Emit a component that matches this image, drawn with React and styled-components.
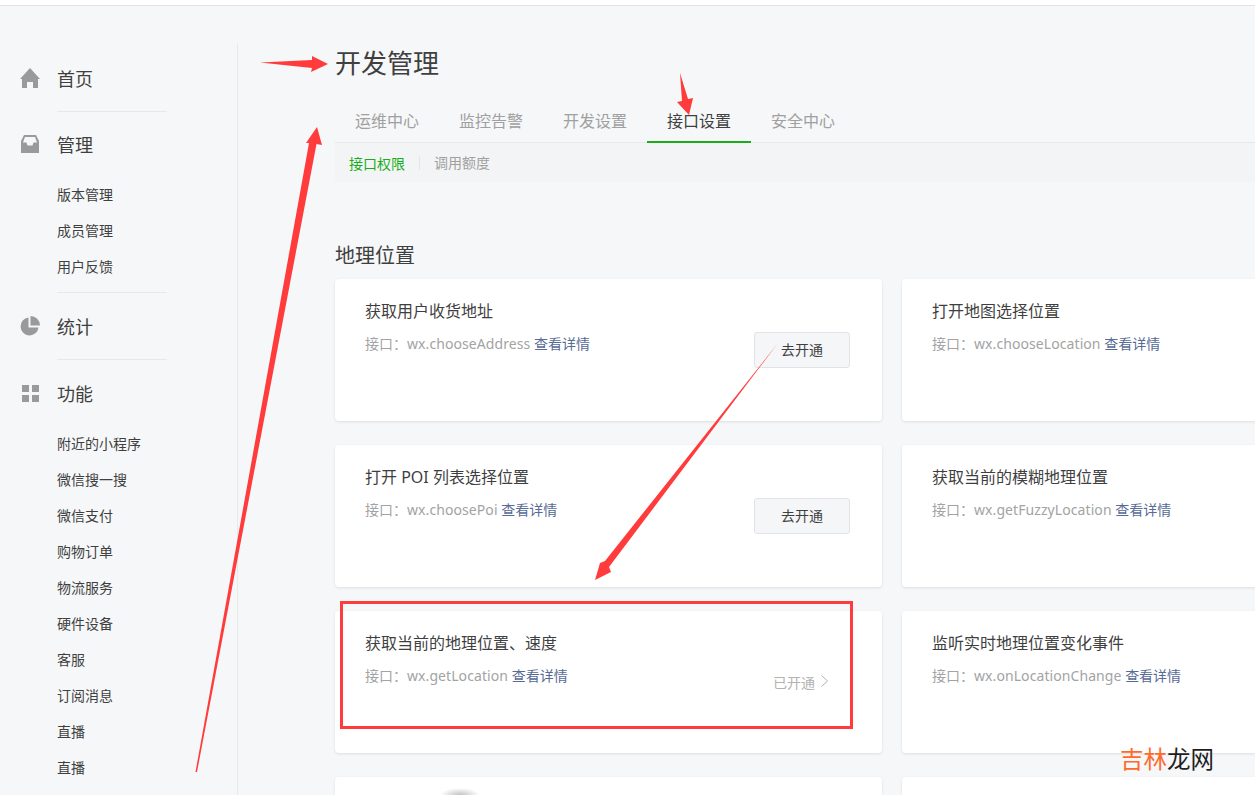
import React from 'react';
import styled, { createGlobalStyle } from 'styled-components';

const Global = createGlobalStyle`
  html, body {
    margin: 0;
    height: 100%;
    overflow: hidden;
    background: #f6f7f9;
  }
  body {
    font-family: "Noto Sans", "Noto Sans CJK SC", sans-serif;
    color: #3f3f3f;
  }
`;

const Page = styled.div`
  position: relative;
  width: 1255px;
  height: 795px;
  overflow: hidden;
`;

const TopBar = styled.div`
  height: 5px;
  background: #fff;
  border-bottom: 1px solid #e1e2e5;
`;

const Shell = styled.div`
  display: flex;
  align-items: flex-start;
`;

const Sidebar = styled.nav`
  flex: none;
  width: 238px;
  height: 751px;
  margin-top: 38px;
  padding-top: 2px;
  box-sizing: border-box;
  border-right: 1px solid #e7e8eb;
`;

const NavHead = styled.div`
  display: flex;
  align-items: center;
  height: 64px;
  font-size: 18px;
  color: #3f3f3f;
`;

const StatHead = styled(NavHead)`
  margin: 1px 0;
`;

const FeatureHead = styled(NavHead)`
  margin: 1px 0 0;
`;

const NavIcon = styled.span`
  display: flex;
  justify-content: center;
  width: 20px;
  margin: 0 17px 0 20px;
  svg { display: block; fill: #9a9a9a; }
`;

const Divider = styled.div`
  width: 110px;
  height: 1px;
  margin: 1px 0 0 57px;
  background: #e7e8eb;
`;

const SubList = styled.ul`
  list-style: none;
  margin: 1px 0 0;
  padding: 0 0 6px 57px;
`;

const SubItem = styled.li`
  height: 36px;
  line-height: 36px;
  font-size: 14px;
  color: #3f3f3f;
`;

const Main = styled.main`
  flex: none;
  width: 1017px;
  padding: 38px 0 0 97px;
  box-sizing: border-box;
`;

const Title = styled.h1`
  margin: 0;
  height: 38px;
  line-height: 38px;
  font-size: 26px;
  font-weight: 400;
  color: #3f3f3f;
`;

const Tabs = styled.div`
  display: flex;
  height: 40px;
  margin-top: 20px;
  border-bottom: 1px solid #e7e8eb;
`;

const Tab = styled.div`
  width: 104px;
  height: 41px;
  box-sizing: border-box;
  text-align: center;
  line-height: 38px;
  font-size: 16px;
  color: ${({ $active }) => ($active ? '#3f3f3f' : '#a0a0a0')};
  border-bottom: 2px solid ${({ $active }) => ($active ? '#1aad19' : 'transparent')};
`;

const SubNav = styled.div`
  display: flex;
  align-items: center;
  height: 39px;
  box-sizing: border-box;
  padding-left: 14px;
  background: #f3f4f6;
  font-size: 14px;
`;

const SubLink = styled.span`
  color: ${({ $active }) => ($active ? '#1aad19' : '#a0a0a0')};
  & + & {
    margin-left: 14px;
    padding-left: 14px;
    border-left: 1px solid #e4e5e8;
    line-height: 14px;
  }
`;

const SectionTitle = styled.h2`
  margin: 60px 0 9px;
  height: 28px;
  line-height: 28px;
  font-size: 20px;
  font-weight: 400;
  color: #3f3f3f;
`;

const CardGrid = styled.div`
  display: grid;
  grid-template-columns: 547px 547px;
  grid-auto-rows: 142px;
  gap: 24px 20px;
`;

const Card = styled.div`
  position: relative;
  display: flex;
  justify-content: space-between;
  padding: 0 32px 0 30px;
  background: #fff;
  border-radius: 4px;
  box-shadow: 0 1px 3px rgba(0, 0, 0, 0.1);
`;

const CardBody = styled.div`
  padding-top: 21px;
`;

const CardTitle = styled.div`
  height: 22px;
  line-height: 22px;
  font-size: 16px;
  color: #3f3f3f;
`;

const CardDesc = styled.div`
  margin-top: 12px;
  height: 20px;
  line-height: 20px;
  font-size: 14px;
  color: #a3a3a3;
`;

const ApiName = styled.span`
  letter-spacing: 0.08px;
`;

const DetailLink = styled.a`
  color: #576b95;
`;

const OpenButton = styled.button`
  align-self: center;
  flex: none;
  width: 96px;
  height: 36px;
  padding: 0 0 2px;
  background: #f5f6f8;
  border: 1px solid #e2e3e6;
  border-radius: 3px;
  font: inherit;
  font-size: 14px;
  color: #3f3f3f;
`;

const OpenedLink = styled.div`
  align-self: center;
  display: flex;
  align-items: flex-start;
  gap: 6px;
  margin-right: 22px;
  padding-top: 2px;
  font-size: 14px;
  line-height: 20px;
  color: #b2b2b2;
  svg { display: block; margin-top: 2px; }
`;

const Glow = styled.div`
  position: absolute;
  left: 105px;
  top: 11px;
  width: 40px;
  height: 14px;
  background: radial-gradient(ellipse at center, rgba(120, 120, 130, 0.45), rgba(120, 120, 130, 0) 70%);
`;

const Overlay = styled.svg`
  position: absolute;
  left: 0;
  top: 0;
  pointer-events: none;
  polygon { fill: #ff3b3b; }
`;

const RedBox = styled.div`
  position: absolute;
  left: 340px;
  top: 601px;
  width: 513px;
  height: 128px;
  box-sizing: border-box;
  border: 3px solid #ff3b3b;
`;

const Watermark = styled.div`
  position: absolute;
  left: 1120px;
  top: 741px;
  font-size: 23.5px;
  line-height: 36px;
  color: #1f1f1f;
  span { color: #ff6a2b; }
`;

const HomeIcon = () => (
  <svg width="20" height="20" viewBox="0 0 20 20">
    <path d="M10 0 20 11H18V20H13V14H7V20H2V11H0Z" />
  </svg>
);

const InboxIcon = () => (
  <svg width="18" height="18" viewBox="0 0 18 18">
    <path d="M3 0H15L18 6V18H0V6ZM4 2 2 7.5H5.5L6.5 10.5H11.5L12.5 7.5H16L14 2Z" fillRule="evenodd" />
  </svg>
);

const PieIcon = () => (
  <svg width="20" height="20" viewBox="0 0 20 20">
    <path d="M8.5 1.5A9 9 0 1 0 18.5 11.5H8.5Z" />
    <path d="M10.5 0A9.5 9.5 0 0 1 20 9.5H10.5Z" />
  </svg>
);

const GridIcon = () => (
  <svg width="18" height="18" viewBox="0 0 18 18">
    <rect x="1" y="1" width="7" height="7" />
    <rect x="11" y="1" width="7" height="7" />
    <rect x="1" y="11" width="7" height="7" />
    <rect x="11" y="11" width="7" height="7" />
  </svg>
);

const manageItems = ['版本管理', '成员管理', '用户反馈'];
const featureItems = ['附近的小程序', '微信搜一搜', '微信支付', '购物订单', '物流服务', '硬件设备', '客服', '订阅消息', '直播', '直播'];
const tabs = ['运维中心', '监控告警', '开发设置', '接口设置', '安全中心'];

const cards = [
  { title: '获取用户收货地址', api: 'wx.chooseAddress', action: 'open' },
  { title: '打开地图选择位置', api: 'wx.chooseLocation' },
  { title: '打开 POI 列表选择位置', api: 'wx.choosePoi', action: 'open' },
  { title: '获取当前的模糊地理位置', api: 'wx.getFuzzyLocation' },
  { title: '获取当前的地理位置、速度', api: 'wx.getLocation', action: 'opened' },
  { title: '监听实时地理位置变化事件', api: 'wx.onLocationChange' },
  { glow: true },
  {},
];

const App = () => {
  return (
    <Page>
      <Global />
      <TopBar />
      <Shell>
        <Sidebar>
          <NavHead><NavIcon><HomeIcon /></NavIcon>首页</NavHead>
          <Divider />
          <NavHead><NavIcon><InboxIcon /></NavIcon>管理</NavHead>
          <SubList>
            {manageItems.map((item) => <SubItem key={item}>{item}</SubItem>)}
          </SubList>
          <Divider />
          <StatHead><NavIcon><PieIcon /></NavIcon>统计</StatHead>
          <Divider />
          <FeatureHead><NavIcon><GridIcon /></NavIcon>功能</FeatureHead>
          <SubList>
            {featureItems.map((item, i) => <SubItem key={i}>{item}</SubItem>)}
          </SubList>
        </Sidebar>
        <Main>
          <Title>开发管理</Title>
          <Tabs>
            {tabs.map((tab) => <Tab key={tab} $active={tab === '接口设置'}>{tab}</Tab>)}
          </Tabs>
          <SubNav>
            <SubLink $active>接口权限</SubLink>
            <SubLink>调用额度</SubLink>
          </SubNav>
          <SectionTitle>地理位置</SectionTitle>
          <CardGrid>
            {cards.map((card, i) => (
              <Card key={i}>
                {card.title && (
                  <CardBody>
                    <CardTitle>{card.title}</CardTitle>
                    <CardDesc>接口：<ApiName>{card.api}</ApiName> <DetailLink>查看详情</DetailLink></CardDesc>
                  </CardBody>
                )}
                {card.action === 'open' && <OpenButton>去开通</OpenButton>}
                {card.action === 'opened' && (
                  <OpenedLink>
                    已开通
                    <svg width="7" height="12" viewBox="0 0 7 12" fill="none" stroke="#b2b2b2" strokeWidth="1">
                      <path d="M0.5 0.5 6.5 6 0.5 11.5" />
                    </svg>
                  </OpenedLink>
                )}
                {card.glow && <Glow />}
              </Card>
            ))}
          </CardGrid>
        </Main>
      </Shell>
      <RedBox />
      <Overlay width="1255" height="795" viewBox="0 0 1255 795">
        <polygon points="260,62.5 312,60 312,56 328,64 311,72 312,68" />
        <polygon points="195.5,772 309,143 306,143 317,127 322,145 316.5,144 197,772" />
        <polygon points="680,73 688,99 693,98 689,115 677,102 682,101" />
        <polygon points="778,343 605,561 600,563 595,580 611,572 609,567" />
      </Overlay>
      <Watermark><span>吉林</span>龙网</Watermark>
    </Page>
  );
};

export default App;
